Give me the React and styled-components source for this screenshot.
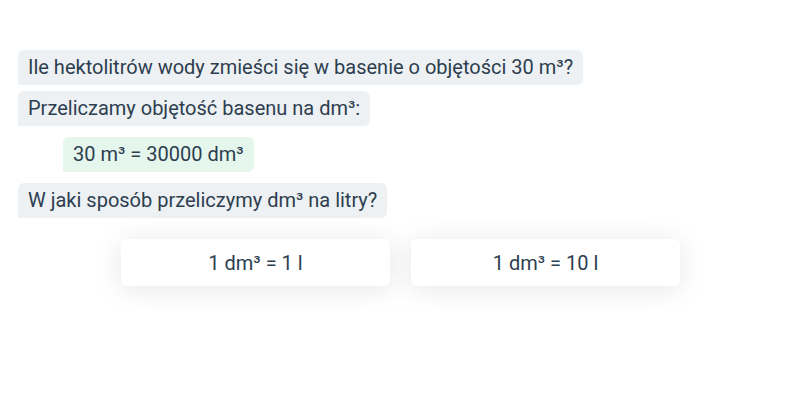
import styled, { createGlobalStyle } from "styled-components";

const GlobalStyle = createGlobalStyle`
  body {
    margin: 0;
    background: #ffffff;
    font-family: Roboto, "Noto Sans", sans-serif;
    color: #2d3e50;
  }
`;

const Chat = styled.div`
  box-sizing: border-box;
  min-height: 400px;
  display: flex;
  flex-direction: column;
  align-items: flex-start;
  padding: 50px 18px 0;
`;

const Bubble = styled.div`
  background-color: ${(p) => (p.$answer ? "#e5f6ec" : "#edf1f3")};
  border-radius: 6px 6px 6px 0;
  padding: 0 10px;
  height: 35px;
  line-height: 35px;
  font-size: 20px;
  margin-left: ${(p) => (p.$answer ? "45px" : "0")};
  margin-top: ${(p) => p.$gap || 0}px;
`;

const Options = styled.div`
  display: flex;
  justify-content: center;
  gap: 21px;
  margin-top: 21px;
  align-self: stretch;
  padding-left: 1px;
`;

const Option = styled.button`
  width: 269px;
  height: 47px;
  border: none;
  border-radius: 6px;
  background: #ffffff;
  box-shadow: 0 3px 28px rgba(0, 0, 0, 0.1);
  font-family: Roboto, "Noto Sans", sans-serif;
  font-size: 20px;
  color: #2d3e50;
  cursor: pointer;
`;

function App() {
  return (
    <>
      <GlobalStyle />
      <Chat>
        <Bubble>Ile hektolitrów wody zmieści się w basenie o objętości 30 m³?</Bubble>
        <Bubble $gap={6}>Przeliczamy objętość basenu na dm³:</Bubble>
        <Bubble $answer $gap={11}>30 m³ = 30000 dm³</Bubble>
        <Bubble $gap={11}>W jaki sposób przeliczymy dm³ na litry?</Bubble>
        <Options>
          <Option>1 dm³ = 1 l</Option>
          <Option>1 dm³ = 10 l</Option>
        </Options>
      </Chat>
    </>
  );
}

export default App;
